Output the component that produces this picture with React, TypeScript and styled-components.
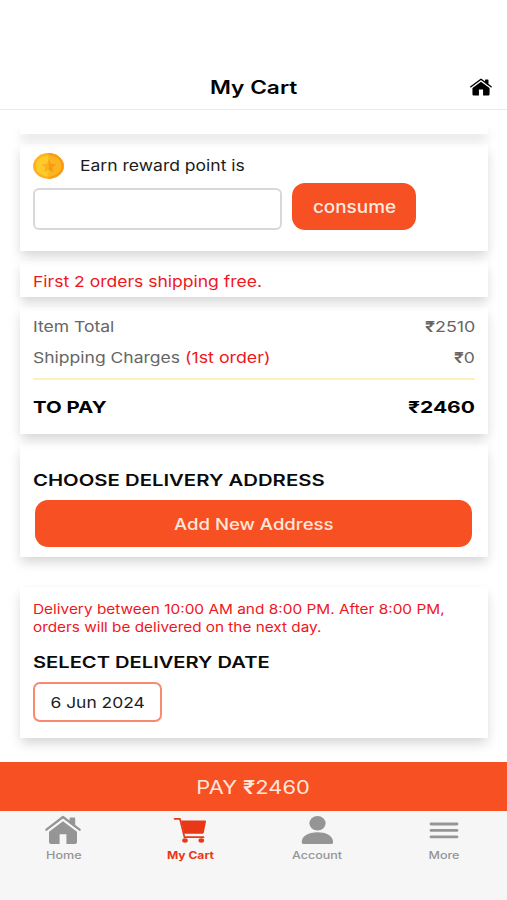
import React from "react";
import styled, { createGlobalStyle } from "styled-components";

const ORANGE = "#f75023";
const RED = "#f0161c";

const GlobalStyle = createGlobalStyle`
  * { box-sizing: border-box; }
  body { margin: 0; background: #fff; font-family: Inter, "Liberation Sans", sans-serif; }
  button { font-family: inherit; border: 0; padding: 0; }
`;

type Align = "left" | "center" | "right";

const Text = styled.span<{ $size: number; $weight?: number; $wide?: number; $color?: string; $align?: Align }>`
  display: block;
  white-space: nowrap;
  font-size: ${(p) => p.$size}px;
  font-weight: ${(p) => p.$weight ?? 400};
  color: ${(p) => p.$color ?? "#1c1c1c"};
  transform: scaleX(${(p) => p.$wide ?? 1.168});
  transform-origin: ${(p) => p.$align ?? "left"} center;
`;

const Rupee = styled.span`
  font-weight: 600;
`;

const Screen = styled.div`
  display: flex;
  flex-direction: column;
  width: 507px;
  height: 900px;
  overflow: hidden;
  background: #fff;
`;

const Header = styled.header`
  flex: none;
  display: grid;
  grid-template-columns: 1fr auto 1fr;
  align-items: center;
  height: 110px;
  padding: 65px 15px 0;
  border-bottom: 1px solid #e9e9e9;
`;

const HeaderAction = styled.div`
  grid-column: 3;
  justify-self: end;
  display: flex;
`;

const HeaderTitle = styled.div`
  grid-column: 2;
`;

const Content = styled.main`
  flex: none;
  height: 636px;
  margin-top: 16px;
  padding: 0 19px 0 20px;
  overflow: hidden;
`;

const Card = styled.section<{ $height: number; $gap?: number; $top?: number }>`
  display: flex;
  flex-direction: column;
  height: ${(p) => p.$height}px;
  margin-bottom: ${(p) => p.$gap ?? 10}px;
  padding: ${(p) => p.$top ?? 0}px 13px 0;
  box-shadow: 0 6px 11px -1px rgba(0, 0, 0, 0.17);
`;

const RewardTitle = styled.div`
  display: flex;
  align-items: center;
  gap: 15.5px;
  height: 25px;
`;

const RewardForm = styled.div`
  display: flex;
  align-items: flex-end;
  gap: 10px;
  height: 47px;
  margin-top: 5px;
`;

const PointsInput = styled.input`
  width: 249px;
  height: 42px;
  padding: 0 10px;
  border: 2px solid #d8d8d8;
  border-radius: 6px;
  background: #fff;
  outline: none;
`;

const Button = styled.button<{ $width: number }>`
  display: flex;
  align-items: center;
  justify-content: center;
  flex: none;
  width: ${(p) => p.$width}px;
  height: 47px;
  border-radius: 13px;
  background: ${ORANGE};
`;

const Notice = styled.div`
  display: flex;
  align-items: center;
  height: 100%;
  padding-top: 5px;
`;

const BillRow = styled.div<{ $height: number }>`
  display: flex;
  align-items: center;
  justify-content: space-between;
  height: ${(p) => p.$height}px;
`;

const BillLabel = styled.div`
  display: flex;
  gap: 26.5px;
`;

const Divider = styled.hr`
  width: 100%;
  height: 2px;
  margin: 4px 0 0;
  border: 0;
  background: #fcf0bd;
`;

const Heading = styled.h2<{ $top: number }>`
  margin: ${(p) => p.$top}px 0 0;
  line-height: 20px;
`;

const AddressAction = styled.div`
  display: flex;
  padding: 10px 0 0 2.4px;
`;

const DeliveryNote = styled.p`
  margin: 0;
  line-height: 18px;
`;

const DateField = styled.button`
  display: flex;
  align-items: center;
  justify-content: center;
  width: 129px;
  height: 40px;
  margin-top: 10px;
  border: 2px solid #f98a70;
  border-radius: 7px;
  background: #fff;
`;

const PayBar = styled.button`
  flex: none;
  display: flex;
  align-items: center;
  justify-content: center;
  width: 100%;
  height: 49px;
  background: ${ORANGE};
`;

const TabBar = styled.nav`
  flex: 1;
  display: grid;
  grid-template-columns: repeat(4, 1fr);
  background: #f6f6f6;
`;

const Tab = styled.div`
  display: flex;
  flex-direction: column;
  align-items: center;
  padding-top: 4px;
  line-height: 14px;
  gap: 4px;
`;

const Svg = styled.svg`
  display: block;
`;

const HouseIcon = ({ width, height, color }: { width: number; height: number; color: string }) => (
  <Svg width={width} height={height} viewBox="0 0 36 30" preserveAspectRatio="none" fill="none">
    <path d="M24.6 3.4q0-.9.9-.9h3.8q.9 0 .9.9v9.4l-5.6-4.6z" fill={color} />
    <path d="M18 6.2 4 16.8v10.2q0 2 2 2h8.6V19.2h6.8V29H30q2 0 2-2V16.8z" fill={color} />
    <path d="M2 16.7 18 4.3 34 16.7" stroke="#f9f9f9" strokeWidth="1.3" />
    <path d="M1.4 14.7 18 2l16.6 12.7" stroke={color} strokeWidth="2.3" strokeLinecap="round" strokeLinejoin="round" />
  </Svg>
);

const CartIcon = () => (
  <Svg width="34" height="30" viewBox="0 0 34 30" fill="none">
    <path d="M8 5.6h24.3q.9 0 .7 1L30.9 17.2q-.3 1.5-1.6 1.5H11.2z" fill="#e93817" />
    <path d="M1.5 3.8h5.4l4.6 18.4h19" stroke="#e93817" strokeWidth="1.7" strokeLinecap="round" strokeLinejoin="round" />
    <ellipse cx="12" cy="25.5" rx="2.8" ry="2.2" fill="#e93817" />
    <ellipse cx="28.3" cy="25.5" rx="2.8" ry="2.2" fill="#e93817" />
  </Svg>
);

const AccountIcon = () => (
  <Svg width="32" height="30" viewBox="0 0 32 30" fill="#959595">
    <ellipse cx="16.5" cy="8.3" rx="8.1" ry="7.2" />
    <path d="M.7 27.2c0-6.2 6.8-10 15.8-10s15.6 3.8 15.6 10q0 1.9-2 1.9H2.7q-2 0-2-1.9z" />
  </Svg>
);

const MenuIcon = () => (
  <Svg width="30" height="30" viewBox="0 0 30 30" stroke="#959595" strokeWidth="2.8" strokeLinecap="round">
    <path d="M2 9h26M2 15.4h26M2 21.9h26" />
  </Svg>
);

const CoinIcon = () => (
  <Svg width="31" height="26" viewBox="0 0 31 26">
    <ellipse cx="15.5" cy="13" rx="15.4" ry="12.9" fill="#ffb01e" />
    <path d="M15.5.1a15.4 12.9 0 0 1 0 25.8z" fill="#fb9b16" />
    <ellipse cx="15.3" cy="12.9" rx="12.6" ry="10.5" fill="#ffca2a" />
    <path d="M15.5 2.4a12.4 10.5 0 0 1 0 21z" fill="#fdb51f" />
    <path d="m15.8 6.3 2 4.6 5.2.4-4 3.2 1.3 4.7-4.5-2.5-4.7 2.5 1.3-4.7-4-3.2 5.2-.4z" fill="#fbb01c" />
    <path d="m15.8 6.3 2 4.6 5.2.4-4 3.2 1.3 4.7-4.5-2.5z" fill="#f79a14" />
  </Svg>
);

export default function App() {
  return (
    <Screen>
      <GlobalStyle />
      <Header>
        <HeaderTitle>
          <Text $size={18} $weight={600} $wide={1.26} $align="center" $color="#000">My Cart</Text>
        </HeaderTitle>
        <HeaderAction>
          <HouseIcon width={22} height={18} color="#000" />
        </HeaderAction>
      </Header>

      <Content>
        <Card $height={8} />

        <Card $height={107} $top={9}>
          <RewardTitle>
            <CoinIcon />
            <Text $size={15}>Earn reward point is</Text>
          </RewardTitle>
          <RewardForm>
            <PointsInput aria-label="Reward points" />
            <Button $width={124}>
              <Text $size={17.5} $weight={500} $wide={1.08} $align="center" $color="#ffeae0">consume</Text>
            </Button>
          </RewardForm>
        </Card>

        <Card $height={36}>
          <Notice>
            <Text $size={15} $color={RED}>First 2 orders shipping free.</Text>
          </Notice>
        </Card>

        <Card $height={127} $top={4}>
          <BillRow $height={31}>
            <Text $size={15} $color="#666">Item Total</Text>
            <Text $size={15} $wide={1.19} $align="right" $color="#666"><Rupee>₹</Rupee>2510</Text>
          </BillRow>
          <BillRow $height={34}>
            <BillLabel>
              <Text $size={15} $color="#666">Shipping Charges</Text>
              <Text $size={15} $wide={1.185} $color={RED}>(1st order)</Text>
            </BillLabel>
            <Text $size={15} $align="right" $color="#666"><Rupee>₹</Rupee>0</Text>
          </BillRow>
          <Divider />
          <BillRow $height={55}>
            <Text $size={16} $weight={700} $wide={1.275} $color="#000">TO PAY</Text>
            <Text $size={16} $weight={700} $wide={1.315} $align="right" $color="#000">₹2460</Text>
          </BillRow>
        </Card>

        <Card $height={113} $gap={30}>
          <Heading $top={26}>
            <Text $size={16} $weight={600} $wide={1.27} $color="#0b0b0b">CHOOSE DELIVERY ADDRESS</Text>
          </Heading>
          <AddressAction>
            <Button $width={437}>
              <Text $size={16} $weight={500} $wide={1.16} $align="center" $color="#ffe6da">Add New Address</Text>
            </Button>
          </AddressAction>
        </Card>

        <Card $height={151} $top={13}>
          <DeliveryNote>
            <Text $size={13} $wide={1.184} $color={RED}>Delivery between 10:00 AM and 8:00 PM. After 8:00 PM,</Text>
            <Text $size={13} $wide={1.178} $color={RED}>orders will be delivered on the next day.</Text>
          </DeliveryNote>
          <Heading $top={16}>
            <Text $size={16} $weight={600} $wide={1.258} $color="#0b0b0b">SELECT DELIVERY DATE</Text>
          </Heading>
          <DateField>
            <Text $size={15} $wide={1.16} $align="center">6 Jun 2024</Text>
          </DateField>
        </Card>
      </Content>

      <PayBar>
        <Text $size={18.5} $wide={1.18} $align="center" $color="#ffe6da">PAY <Rupee>₹</Rupee>2460</Text>
      </PayBar>

      <TabBar>
        <Tab>
          <HouseIcon width={36} height={30} color="#959595" />
          <Text $size={10.5} $weight={500} $wide={1.2} $align="center" $color="#959595">Home</Text>
        </Tab>
        <Tab>
          <CartIcon />
          <Text $size={10.5} $weight={700} $wide={1.15} $align="center" $color="#e93817">My Cart</Text>
        </Tab>
        <Tab>
          <AccountIcon />
          <Text $size={10.5} $weight={500} $wide={1.19} $align="center" $color="#959595">Account</Text>
        </Tab>
        <Tab>
          <MenuIcon />
          <Text $size={10.5} $weight={500} $wide={1.19} $align="center" $color="#959595">More</Text>
        </Tab>
      </TabBar>
    </Screen>
  );
}
